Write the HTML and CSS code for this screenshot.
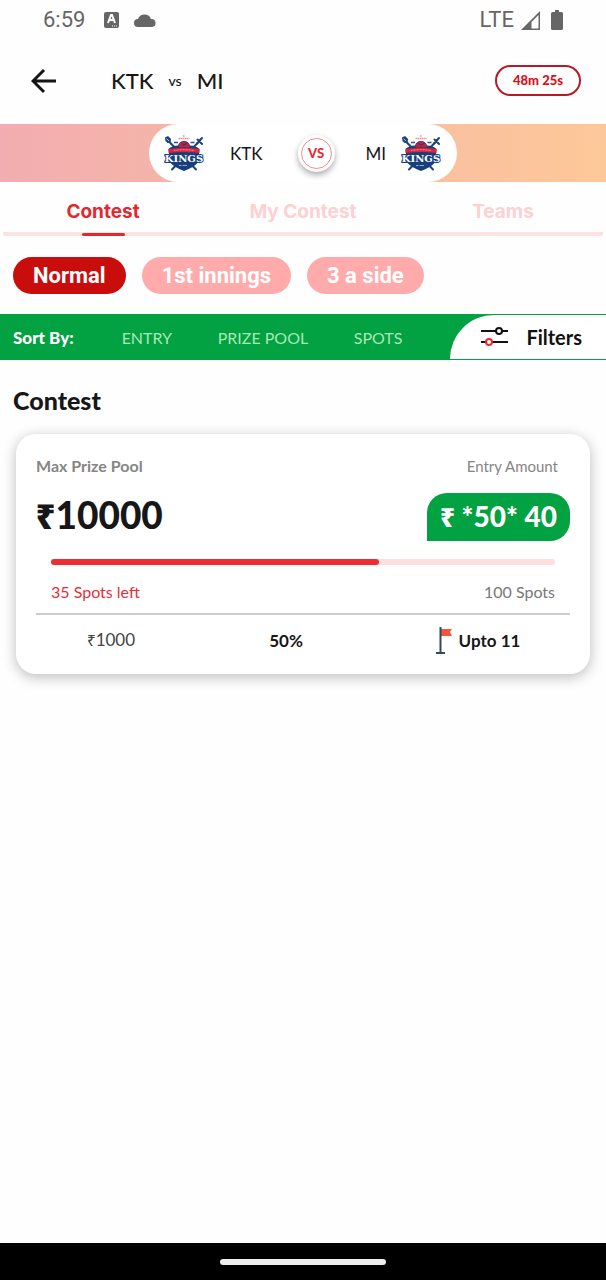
FILE: index.html
```html
<!DOCTYPE html>
<html lang="en">
<head>
<meta charset="utf-8">
<meta name="viewport" content="width=device-width, initial-scale=1">
<title>KTK vs MI</title>
<link rel="stylesheet" href="styles.css">
</head>
<body>
<div class="status">
  <span class="clock">6:59</span>
  <svg class="status-a" viewBox="0 0 15 16"><rect width="15" height="16" rx="2" fill="#666"/><path d="M4 11 7 3h1l3 8M5 8h5" fill="none" stroke="#fff" stroke-width="2"/><path d="M8 14h1m1 0h1m1 0h1" stroke="#fff"/></svg>
  <svg class="status-cloud" viewBox="0 0 22 13"><path d="M4 13A4 4 0 0 1 4 5 7 7 0 0 1 17 5A4 4 0 0 1 18 13Z" fill="#666"/></svg>
  <span class="network">LTE</span>
  <svg class="status-signal" viewBox="0 0 19 19"><path d="M0 19 19 0V19Z" fill="#666"/><path d="M10.500 11 17.500 4V17.500H10.500Z" fill="#fff"/></svg>
  <svg class="status-battery" viewBox="0 0 12 20"><path d="M4 0h4v2h2.500Q12 2 12 3.500v15Q12 20 10.500 20h-9Q0 20 0 18.500v-15Q0 2 1.500 2H4Z" fill="#666"/></svg>
</div>

<header class="header">
  <button class="back" aria-label="Back"><svg viewBox="0 0 26 26"><path d="M25 13H3M13 2 2 13 13 24" fill="none" stroke="#151515" stroke-width="3"/></svg></button>
  <h1 class="title">KTK <small>vs</small> MI</h1>
  <span class="timer">48m 25s</span>
</header>

<section class="banner">
  <div class="match">
    <svg class="crest" viewBox="0 0 80 72" role="img" aria-label="KTK logo">
      <g id="kings">
        <path d="M8 11 64 69M72 11 16 69" stroke="#1d4378" stroke-width="4" stroke-linecap="round"/>
        <path d="M2 5 8 2 14 8 13 15 7 16 3 12Z" fill="#1d4378"/>
        <path d="M5 7 10 12" stroke="#a9c3e2" stroke-width="2"/>
        <path d="M67 9 76 18M66 17 76 6" stroke="#1d4378" stroke-width="4" stroke-linecap="round"/>
        <path d="M38 2h4M29 7h22" stroke="#ee8992" stroke-width="3" stroke-dasharray="3 1"/>
        <path d="M20 15h8M53 15h8" stroke="#315485" stroke-width="3"/>
        <path d="M9 28Q16 21 28 21 31 12 40 12 49 12 52 21 64 21 71 28L68 55Q58 66 40 72 22 66 12 55Z" fill="#173f7d"/>
        <path d="M29 24Q29 13 40 13 50 13 52 24 46 27 40 24 35 27 29 24Z" fill="#b92443"/>
        <path d="M35 17 40 20 47 16" fill="none" stroke="#173f7d" stroke-width="2"/>
        <path d="M9 28Q40 24 71 28V36Q40 32 9 36Z" fill="#df233b"/>
        <path d="M20 31Q40 28 60 31" fill="none" stroke="#f2a6af" stroke-width="2" stroke-dasharray="2 1"/>
        <text x="40" y="54" text-anchor="middle" class="logo-text">KINGS</text>
        <path d="M30 61h5m2 0h9" stroke="#8fa9d0" stroke-width="2"/>
      </g>
    </svg>
    <span class="team">KTK</span>
    <span class="versus"><b>VS</b></span>
    <span class="team team-away">MI</span>
    <svg class="crest" viewBox="0 0 80 72" role="img" aria-label="MI logo"><use href="#kings"/></svg>
  </div>
</section>

<nav class="tabs">
  <button class="tab active">Contest</button>
  <button class="tab">My Contest</button>
  <button class="tab">Teams</button>
</nav>

<div class="chips">
  <button class="chip selected">Normal</button>
  <button class="chip">1st innings</button>
  <button class="chip">3 a side</button>
</div>

<div class="sort">
  <b class="sort-label">Sort By:</b>
  <div class="sort-options">
    <button>ENTRY</button>
    <button>PRIZE POOL</button>
    <button>SPOTS</button>
  </div>
  <button class="filters">
    <svg viewBox="0 0 27 20"><g fill="none" stroke-width="2"><path d="M0 4h15m6 0h6M0 15h5m6 0h16" stroke="#111"/><circle cx="18" cy="4" r="3" stroke="#111"/><circle cx="8" cy="15" r="3" stroke="#ec2c35"/></g></svg>
    Filters
  </button>
</div>

<main class="main">
  <h2 class="heading">Contest</h2>
  <article class="card">
    <div class="labels"><b>Max Prize Pool</b><span class="entry-label">Entry Amount</span></div>
    <div class="prices">
      <strong class="prize"><span class="rupee">₹</span>10000</strong>
      <button class="entry"><span class="rupee">₹</span> *50* 40</button>
    </div>
    <div class="progress"><div class="fill" style="width:65%"></div></div>
    <div class="spots"><span class="left">35 Spots left</span><span>100 Spots</span></div>
    <div class="facts">
      <span class="first"><span class="rupee">₹</span>1000</span>
      <b>50%</b>
      <b class="upto"><svg viewBox="0 0 16 27"><path d="M5 2h11l-2 3 2 4H5Z" fill="#f4563d"/><path d="M4.500 0v26M0 26h9" fill="none" stroke="#34495e" stroke-width="2"/></svg>Upto 11</b>
    </div>
  </article>
</main>

<footer class="gesture"><span></span></footer>
</body>
</html>
```
FILE: styles.css
```css
* { box-sizing: border-box; }
body {
  margin: 0;
  min-height: 100vh;
  display: flex;
  flex-direction: column;
  background: #fefefe;
  color: #17171a;
  font-family: Lato, "Noto Sans", sans-serif;
}
button { border: 0; padding: 0; background: none; color: inherit; font: inherit; white-space: nowrap; }
svg { display: block; flex: none; }
.logo-text { font: 700 20px "DejaVu Serif", serif; fill: #fff; stroke: #173f7d; stroke-width: 4px; paint-order: stroke; }

.status { display: flex; align-items: center; height: 40px; padding: 0 43px; color: #666; font: 22px/28px Roboto, sans-serif; }
.clock { margin-right: 19px; }
.status-a { width: 15px; height: 16px; margin-right: 15px; }
.status-cloud { width: 22px; height: 13px; }
.network { margin-left: auto; }
.status-signal { width: 19px; height: 19px; margin: 0 11px 0 7px; }
.status-battery { width: 12px; height: 20px; }

.header { display: flex; align-items: center; height: 84px; padding: 0 25px 3px 31px; }
.back { width: 26px; height: 26px; margin-right: 54px; }
.title { display: flex; align-items: center; gap: 15px; margin: 0; font-size: 22px; font-weight: 500; }
.title small { font-size: 14px; }
.timer { margin-left: auto; padding: 0 16px; border: 2px solid #b51a26; border-radius: 16px; color: #d9101a; font-size: 13px; font-weight: 900; line-height: 27px; }

.banner { display: flex; justify-content: center; background: linear-gradient(90deg, #f2adb0, #fdc899); }
.match { display: flex; align-items: center; width: 308px; height: 58px; padding: 0 16px 0 15px; border-radius: 29px; background: #fff; }
.crest { width: 40px; height: 36px; overflow: visible; }
.team { margin-left: 26px; font-size: 17px; }
.team-away { margin: 0 15px 0 auto; }
.versus { display: flex; width: 37px; height: 37px; margin-left: 35px; padding: 3px; border-radius: 50%; background: #fff; box-shadow: 0 3px 6px #0005; }
.versus b { flex: 1; border: 1px solid #ef8c90; border-radius: 50%; color: #e52b35; font-size: 13px; font-weight: 900; line-height: 29px; text-align: center; }

.tabs { display: grid; grid-template-columns: repeat(3, 1fr); margin: 0 3px; border-bottom: 4px solid #fde2e4; border-radius: 2px; }
.tab { height: 50px; padding-top: 10px; color: #fdd0d2; font: 700 19px/24px Inter, sans-serif; }
.tab.active { color: #e4282f; display: flex; flex-direction: column; align-items: center; justify-content: space-between; height: 54px; padding-top: 18px; margin-bottom: -4px; }
.tab.active::after { content: ""; width: 43px; height: 3px; border-radius: 2px; background: #e4282f; }

.chips { display: flex; gap: 16px; padding: 21px 13px 20px; }
.chip { height: 37px; padding: 0 20px; border-radius: 19px; background: #ffabab; color: #fff; font: 700 22px/37px Roboto, sans-serif; }
.chip.selected { background: #c90c0c; }

.sort { display: flex; align-items: stretch; height: 46px; padding: 1px 0 1px 13px; background: #02a141; color: #fff; font-size: 16px; }
.sort-label { align-self: center; font-size: 17px; font-weight: 900; }
.sort-options { flex: 1; display: flex; justify-content: space-between; padding: 0 48px; color: #a7e9b7; }
.filters { display: flex; align-items: center; gap: 18px; padding: 0 24px 0 31px; border-top-left-radius: 44px; background: #fff; color: #111; font-size: 20px; font-weight: 700; }
.filters svg { width: 27px; height: 20px; }

.main { flex: 1; padding: 25px 16px; }
.heading { margin: 0 -3px 19px; font-size: 25px; line-height: 30px; font-weight: 900; }
.card { padding: 20px; border-radius: 20px; background: #fff; box-shadow: 0 3px 14px #0004; }
.labels { display: flex; justify-content: space-between; padding-right: 12px; color: #858585; font-size: 16px; line-height: 24px; }
.entry-label { font-size: 15px; }
.prices { display: flex; align-items: flex-start; justify-content: space-between; margin: 15px 0 18px; }
.prize { font-size: 37px; line-height: 44px; font-weight: 900; }
.rupee { font-family: "Noto Sans", sans-serif; font-size: 0.9em; }
.entry { height: 48px; padding: 0 13px 2px; border-radius: 20px 20px 20px 0; background: #02a141; color: #fff; font-size: 28px; font-weight: 900; }
.progress { height: 6px; margin: 0 15px; border-radius: 3px; background: #fddfe0; }
.fill { height: 100%; border-radius: 3px; background: #ee2d30; }
.spots { display: flex; justify-content: space-between; padding: 15px 15px 9px; border-bottom: 2px solid #ccc; color: #777; font-size: 16px; line-height: 24px; }
.left { color: #e33038; }
.facts { display: grid; grid-template-columns: 150px 1fr 184px; align-items: center; justify-items: center; padding-top: 11px; font-size: 17px; line-height: 27px; }
.first { color: #444; }
.upto { display: flex; gap: 7px; }
.upto svg { width: 16px; height: 27px; }

.gesture { display: flex; align-items: center; justify-content: center; height: 37px; background: #000; }
.gesture span { width: 166px; height: 6px; border-radius: 3px; background: #eee; }
```
